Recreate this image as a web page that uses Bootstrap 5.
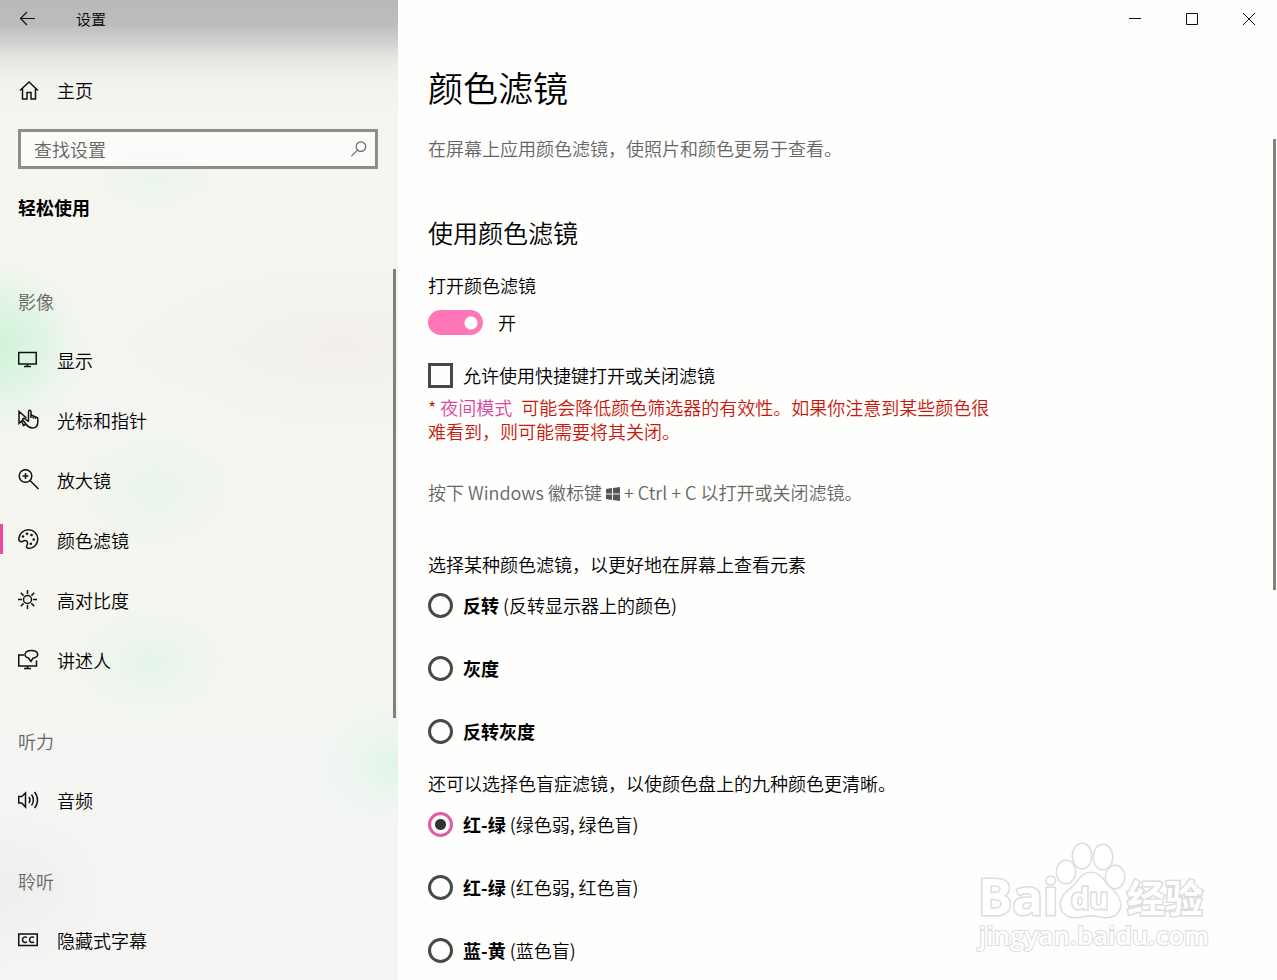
<!DOCTYPE html>
<html lang="zh-CN">
<head>
<meta charset="utf-8">
<meta name="viewport" content="width=device-width, initial-scale=1">
<title>设置</title>
<link href="https://cdn.jsdelivr.net/npm/bootstrap@5.3.0/dist/css/bootstrap.min.css" rel="stylesheet">
<style>
  body { font-family: "Noto Sans CJK SC", sans-serif; font-size: 18px; font-weight: 350; line-height: 24px; color: #000; background: #fefefd; }
  svg { display: block; fill: none; stroke: #111; stroke-width: 1.5; }
  h1 { font-size: 35px; line-height: 48px; font-weight: 350; margin: 25px 0; }
  h2 { font-size: 25px; line-height: 32px; font-weight: 350; margin: 56px 0 25px; }
  .soft { color: #666; }

  .side {
    width: 398px;
    background:
      linear-gradient(#b9b9b9 0, #bcbcbc 24px, rgba(200,200,200,.8) 42px, rgba(222,222,222,.6) 60px, rgba(236,236,236,.5) 80px, rgba(242,242,242,0) 120px),
      radial-gradient(ellipse 100px 100px at 0 345px, #d0f3da 0, rgba(214,244,222,.7) 40%, rgba(230,245,232,.25) 75%, rgba(245,246,239,0) 100%),
      radial-gradient(ellipse 95px 70px at 155px 490px, #e8f4eb, rgba(236,245,237,.5) 50%, rgba(245,246,239,0)),
      radial-gradient(ellipse 90px 65px at 150px 662px, #e4f4e8, rgba(234,245,236,.5) 50%, rgba(245,246,239,0)),
      radial-gradient(ellipse 90px 70px at 398px 765px, #def5e9, rgba(230,245,236,.5) 50%, rgba(245,246,243,0)),
      radial-gradient(ellipse 70px 35px at 155px 180px, #ebf5ed, rgba(245,246,239,0)),
      radial-gradient(ellipse 240px 90px at 340px 345px, #f2efeb, rgba(245,246,239,0)),
      radial-gradient(ellipse 120px 90px at 0 890px, #eeefed, rgba(245,245,244,0)),
      linear-gradient(#f5f6ef 0, #f5f6ef 300px, #f4f5f2 420px, #f5f6ef 500px, #f5f6ef 660px, #f5f6f4 760px, #f5f5f4 100%);
  }
  .bar { height: 38px; font-size: 15px; }
  .plain { border: 0; background: none; padding: 0; }
  .back { margin-left: 18px; width: 58px; }
  .line { height: 60px; padding-left: 18px; color: #000; text-decoration: none; border-radius: 0; }
  .line svg { width: 22px; height: 22px; margin-right: 17px; flex: none; }
  .home { margin-top: 22px; }
  .current { position: relative; }
  .current::before { content: ""; position: absolute; left: 0; top: 14px; width: 3px; height: 30px; background: #ee4a9d; }
  .group { height: 80px; padding: 39px 0 0 18px; margin: 0; font-size: 18px; line-height: 24px; font-weight: 350; color: #666; }
  .find { margin: 9px 20px 0 18px; height: 40px; border: 3px solid #8c8e89; background: rgba(255,255,255,.6); padding-right: 8px; }
  .find input { padding: 0 0 0 13px; font-size: 18px; font-weight: 350; height: 34px; background: none; border: 0; }
  .find input::placeholder { color: #666; opacity: 1; }
  .find svg { stroke: #666; }
  .section { font-size: 18px; line-height: 24px; font-weight: 700; margin: 26px 0 31px 18px; }
  .thumb { position: absolute; width: 3px; background: #80827e; }
  .side .thumb { right: 2px; top: 269px; height: 449px; }
  .content .thumb { right: 1px; top: 139px; height: 451px; }

  .winbtn { width: 57px; height: 38px; display: flex; align-items: center; justify-content: center; }
  .winbtn svg { stroke-width: 1; }
  .copy { padding-left: 30px; padding-right: 70px; }
  .copy p { margin: 0; }
  .form-check { display: flex; align-items: center; gap: 10px; padding: 0; margin: 0; min-height: 26px; }
  .form-check .form-check-input { width: 25px; height: 25px; margin: 0; float: none; border: 3px solid #484848; background: none; box-shadow: none; flex: none; }
  .form-check .form-check-input[type=checkbox] { border-radius: 0; }
  .form-check .form-check-input[type=radio]:checked { border-color: #e35aa3; background: radial-gradient(circle, #333 0 5px, transparent 6px); }
  .form-switch { margin: 12px 0 27px; gap: 15px; }
  .form-switch .form-check-input[type=checkbox] { width: 55px; height: 25px; border: 0; border-radius: 13px; background: radial-gradient(circle at 43px 13px, #fff 0 6px, transparent 7px) #ff76b9; }
  .warn { max-width: 565px; color: #c8180c; }
  .copy .warn { margin: 7px 0 37px; }
  .warn a { color: #d8459f; text-decoration: none; margin-right: 5px; }
  .winlogo { display: inline-block; width: 14px; height: 14px; fill: #555; stroke: none; vertical-align: -1px; }
  .copy .lead-in { margin: 48px 0 16px; }
  .copy .second { margin: 27px 0 16px; }
  .choices { display: flex; flex-direction: column; gap: 37px; }
  .mark-art { position: absolute; right: 62px; bottom: 22px; width: 240px; height: 116px; fill: #fff; stroke: #dcdcdb; stroke-width: 3; paint-order: stroke; pointer-events: none; }
  .mark-art text { font-family: "Open Sans", "Noto Sans CJK SC", sans-serif; font-weight: 700; }
  .mark-art .url { font-weight: 600; stroke-width: 2; }
  .fine { stroke-width: 1.2; }
</style>
</head>
<body>
<div class="d-flex min-vh-100">
  <aside class="side position-relative flex-shrink-0">
    <header class="bar d-flex align-items-center">
      <button class="plain back" type="button" aria-label="返回">
        <svg class="fine" width="20" height="20" viewBox="0 0 20 20"><path d="M17 9.500H3M9 3L2.500 9.500 9 16"/></svg>
      </button>
      <span>设置</span>
    </header>
    <a class="line home d-flex align-items-center" href="#">
      <svg viewBox="0 0 22 22"><path d="M2 11.500L11 3l9 8.500M4.500 9.500V20h4.500v-6.500h4V20h4.500V9.500"/></svg><span>主页</span>
    </a>
    <div class="find d-flex align-items-center">
      <input class="form-control shadow-none rounded-0" type="search" placeholder="查找设置" aria-label="查找设置">
      <svg class="fine" width="18" height="18" viewBox="0 0 18 18"><circle cx="11.500" cy="6.500" r="5"/><path d="M7.900 10.100L1.500 16.500"/></svg>
    </div>
    <h2 class="section">轻松使用</h2>
    <nav class="nav flex-column flex-nowrap">
      <h3 class="group">影像</h3>
      <a class="line d-flex align-items-center" href="#"><svg viewBox="0 0 22 22"><path d="M.75 3.500h17.500v11.500H.75zM9.500 15v2.500M6 17.500h7"/></svg>显示</a>
      <a class="line d-flex align-items-center" href="#"><svg viewBox="0 0 22 22"><path d="M8.500 9L1 2.500v12l2.500-2.500 2 4.500 2-1M10.500 12V3c0-2.200 2.500-2.200 2.500 0v6M13 6.500c1-.6 2.200-.2 2.200 1v2M15.200 7.500c1-.5 2.200 0 2.200 1v1.500M17.400 8.500c1.300-.6 2.400 0 2.400 1.300V13c0 4-2.300 6-5.500 6-3 0-4.500-1.500-6-3.500L4.800 11c-.6-1.500 1-2.300 2.200-1.200l3.500 3"/></svg>光标和指针</a>
      <a class="line d-flex align-items-center" href="#"><svg viewBox="0 0 22 22"><circle cx="7.500" cy="7" r="6.300"/><path d="M12 11.500l8.500 8.500M4.500 7h6M7.500 4v6"/></svg>放大镜</a>
      <a class="line current d-flex align-items-center" href="#" aria-current="page"><svg viewBox="0 0 22 22"><path d="M.8 9.500C1.500 4.500 5.500.8 10.500.8c5.300 0 9.300 4 9.300 9.300s-4 9.300-8.800 9.300c-2.500 0-3-1.600-2-3.400 1.300-2.500.3-4.500-2-4.500-2 0-2 1.500-4 1.200C1.200 12.400.7 11 .8 9.500z"/><g fill="#111" stroke="none"><circle cx="5" cy="7.500" r="1.300"/><circle cx="9" cy="4.800" r="1.300"/><circle cx="13.500" cy="6" r="1.300"/><circle cx="15.700" cy="10.500" r="1.300"/><circle cx="12.800" cy="14.800" r="1.300"/></g></svg>颜色滤镜</a>
      <a class="line d-flex align-items-center" href="#"><svg viewBox="0 0 22 22"><circle cx="9.500" cy="10.500" r="4"/><path d="M9.500 1v4M9.500 16v4M0 10.500h4M15 10.500h4M2.800 3.800l2.800 2.800M13.400 14.400l2.800 2.800M16.200 3.800l-2.800 2.800M5.600 14.400l-2.800 2.800"/></svg>高对比度</a>
      <a class="line d-flex align-items-center" href="#"><svg viewBox="0 0 22 22"><path d="M6 6H.75v11h17.750v-5.500M9.500 17v3M6 19.500h7M10.500 9C5 8 6 1.500 13.200 1.500c7.500 0 8.300 5.500 3.300 7.300l-1.500.4-2 3.300z"/></svg>讲述人</a>
      <h3 class="group">听力</h3>
      <a class="line d-flex align-items-center" href="#"><svg viewBox="0 0 22 22"><path d="M.75 7.500h3l3.750-3.500v14l-3.750-4h-3zM11 8c1.200 1.800 1.200 4.200 0 6M13.500 5.500c2.500 3 2.500 8 0 11M16.500 3c4 4.500 4 11.500 0 16"/></svg>音频</a>
      <h3 class="group">聆听</h3>
      <a class="line d-flex align-items-center" href="#"><svg viewBox="0 0 22 22"><path d="M.75 5h18.500v11.500H.75zM9 8.500c-1.700-1.200-4.500-.6-4.500 2.200s2.800 3.400 4.500 2.200M16 8.500c-1.700-1.200-4.500-.6-4.500 2.200s2.800 3.400 4.500 2.200"/></svg>隐藏式字幕</a>
    </nav>
    <div class="thumb"></div>
  </aside>

  <main class="content position-relative flex-grow-1">
    <header class="bar d-flex justify-content-end">
      <button class="plain winbtn" type="button" aria-label="最小化"><svg width="12" height="12"><path d="M0 5.500h12"/></svg></button>
      <button class="plain winbtn" type="button" aria-label="最大化"><svg width="12" height="12"><path d="M.5 .5h11v11H.5z"/></svg></button>
      <button class="plain winbtn" type="button" aria-label="关闭"><svg width="12" height="12"><path d="M0 0l12 12M12 0L0 12"/></svg></button>
    </header>
    <div class="copy">
      <h1>颜色滤镜</h1>
      <p class="soft">在屏幕上应用颜色滤镜，使照片和颜色更易于查看。</p>
      <h2>使用颜色滤镜</h2>
      <p id="filter-label">打开颜色滤镜</p>
      <div class="form-check form-switch">
        <input class="form-check-input" type="checkbox" role="switch" id="filter" aria-labelledby="filter-label" checked>
        <label for="filter">开</label>
      </div>
      <div class="form-check">
        <input class="form-check-input" type="checkbox" id="hotkey">
        <label for="hotkey">允许使用快捷键打开或关闭滤镜</label>
      </div>
      <p class="warn">* <a href="#">夜间模式</a> 可能会降低颜色筛选器的有效性。如果你注意到某些颜色很难看到，则可能需要将其关闭。</p>
      <p class="soft">按下 Windows 徽标键 <svg class="winlogo" viewBox="0 0 14 14"><path d="M0 2l6-1v5.500H0zM7 .9L14 0v6.500H7zM0 7.500h6V13l-6-1zM7 7.500h7V14l-7-.9z"/></svg> + Ctrl + C 以打开或关闭滤镜。</p>
      <p class="lead-in">选择某种颜色滤镜，以更好地在屏幕上查看元素</p>
      <div class="choices">
        <div class="form-check"><input class="form-check-input" type="radio" name="mode" id="m1"><label for="m1"><b>反转</b> (反转显示器上的颜色)</label></div>
        <div class="form-check"><input class="form-check-input" type="radio" name="mode" id="m2"><label for="m2"><b>灰度</b></label></div>
        <div class="form-check"><input class="form-check-input" type="radio" name="mode" id="m3"><label for="m3"><b>反转灰度</b></label></div>
      </div>
      <p class="second">还可以选择色盲症滤镜，以使颜色盘上的九种颜色更清晰。</p>
      <div class="choices">
        <div class="form-check"><input class="form-check-input" type="radio" name="mode" id="m4" checked><label for="m4"><b>红-绿</b> (绿色弱, 绿色盲)</label></div>
        <div class="form-check"><input class="form-check-input" type="radio" name="mode" id="m5"><label for="m5"><b>红-绿</b> (红色弱, 红色盲)</label></div>
        <div class="form-check"><input class="form-check-input" type="radio" name="mode" id="m6"><label for="m6"><b>蓝-黄</b> (蓝色盲)</label></div>
      </div>
    </div>
    <div class="thumb"></div>
    <svg class="mark-art" viewBox="0 0 240 116" role="img" aria-label="Baidu 经验">
      <text x="3" y="73" font-size="51">Bai</text>
      <ellipse cx="91" cy="30" rx="9" ry="11"/><ellipse cx="107" cy="14" rx="9" ry="12"/><ellipse cx="128" cy="15" rx="9" ry="12"/><ellipse cx="140" cy="35" rx="9" ry="11"/>
      <path d="M116 31c9 0 12 8 18 14 7 6 11 11 11 18 0 8-7 12-14 12-6 0-9-2-15-2s-10 2-16 2c-8 0-14-5-14-13 0-7 6-12 12-17 6-6 9-14 18-14z"/>
      <text x="96" y="67" font-size="29">du</text>
      <text x="152" y="70" font-size="38">经验</text>
      <text class="url" x="4" y="103" font-size="26">jingyan.baidu.com</text>
    </svg>
  </main>
</div>
<script src="https://cdn.jsdelivr.net/npm/bootstrap@5.3.0/dist/js/bootstrap.bundle.min.js"></script>
</body>
</html>
